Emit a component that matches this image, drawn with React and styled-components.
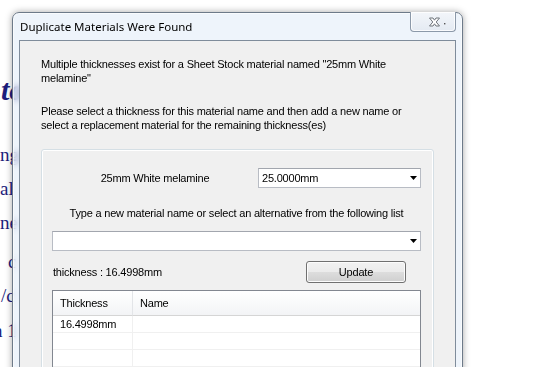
import React from "react";
import styled, { createGlobalStyle } from "styled-components";

const GlobalStyle = createGlobalStyle`
  html, body {
    margin: 0;
    padding: 0;
    background: #ffffff;
  }
`;

const Desktop = styled.div`
  position: relative;
  width: 536px;
  height: 367px;
  overflow: hidden;
  background: #ffffff;
`;

const BackText = styled.div`
  display: flex;
  flex-direction: column;
  font-family: "Liberation Serif", "DejaVu Serif", serif;
  color: #1d1d7c;
`;

const BackLine = styled.div`
  display: flex;
  align-items: center;
  white-space: nowrap;
  margin-top: ${({ $top }) => $top}px;
  margin-left: ${({ $x }) => $x}px;
  height: ${({ $h }) => $h}px;
  font-size: ${({ $size }) => $size}px;
  font-style: ${({ $italic }) => ($italic ? "italic" : "normal")};
  font-weight: ${({ $bold }) => ($bold ? 700 : 400)};
`;

const Window = styled.div`
  position: absolute;
  left: 12px;
  top: 12px;
  width: 451px;
  height: 400px;
  box-sizing: border-box;
  display: flex;
  flex-direction: column;
  padding: 0 6px;
  border: 1px solid #6d7a89;
  border-radius: 7px 7px 0 0;
  background: rgba(226, 236, 248, 0.6);
  backdrop-filter: blur(3px);
  box-shadow: 0 0 7px rgba(0, 0, 0, 0.35), inset 0 0 0 1px rgba(255, 255, 255, 0.7);
`;

const TitleBar = styled.div`
  height: 27px;
  display: flex;
  align-items: center;
  padding-left: 1px;
  font-family: "Noto Sans", "Open Sans", sans-serif;
  font-size: 11.5px;
  color: #000;
`;

const CloseButton = styled.div`
  position: absolute;
  top: -1px;
  right: 6px;
  width: 46px;
  height: 20px;
  box-sizing: border-box;
  display: flex;
  align-items: center;
  padding-left: 18px;
  border: 1px solid #8c99a9;
  border-top: none;
  border-radius: 0 0 4px 4px;
  background: linear-gradient(#f3f6fa, #e4eaf2);
  box-shadow: inset 0 0 0 1px rgba(255, 255, 255, 0.8);
`;

const Client = styled.div`
  flex: 1;
  border: 1px solid #7f8c9b;
  border-bottom: none;
  background: #f0f0f0;
  padding: 16px 21px 0 21px;
  font-family: "Liberation Sans", Arial, sans-serif;
  font-size: 11px;
  letter-spacing: -0.2px;
  color: #000;
`;

const Para = styled.p`
  margin: 0 0 ${({ $gap }) => $gap}px 0;
  line-height: 14px;
`;

const GroupBox = styled.div`
  border: 1px solid #d5dfe5;
  border-radius: 3px;
  box-shadow: inset 0 0 0 1px #ffffff;
  padding: 18px 12px 0 10px;
  height: 240px;
`;

const Row = styled.div`
  display: flex;
  align-items: center;
  margin-bottom: ${({ $gap }) => $gap}px;
`;

const RowLabel = styled.div`
  flex: 1;
  text-align: center;
`;

const CenterText = styled.div`
  text-align: center;
  line-height: 14px;
  margin-bottom: ${({ $gap }) => $gap}px;
`;

const Combo = styled.div`
  box-sizing: border-box;
  width: ${({ $w }) => $w};
  height: 20px;
  display: flex;
  align-items: center;
  padding: 0 3px 0 3px;
  background: #ffffff;
  border: 1px solid #b8bcc4;
  border-top-color: #a2a6ae;
`;

const ComboText = styled.span`
  flex: 1;
`;

const Arrow = styled.svg`
  width: 7px;
  height: 4px;
`;

const InfoRow = styled.div`
  display: flex;
  align-items: center;
  justify-content: space-between;
  margin-bottom: 7px;
  padding-left: 1px;
  padding-right: 15px;
`;

const Button = styled.div`
  box-sizing: border-box;
  width: 100px;
  height: 22px;
  display: flex;
  align-items: center;
  justify-content: center;
  border: 1px solid #707070;
  border-radius: 3px;
  background: linear-gradient(#f2f2f2 0%, #ebebeb 50%, #dddddd 51%, #cfcfcf 100%);
  box-shadow: inset 0 0 0 1px #fcfcfc;
`;

const ListView = styled.div`
  box-sizing: border-box;
  width: 369px;
  height: 120px;
  border: 1px solid #828790;
  background: #ffffff;
  display: grid;
  grid-template-columns: 80px 1fr;
  grid-template-rows: 25px;
  grid-auto-rows: 17px;
  align-content: start;
`;

const HeaderCell = styled.div`
  box-sizing: border-box;
  display: flex;
  align-items: center;
  padding-left: 7px;
  background: linear-gradient(#ffffff, #f3f4f6);
  border-bottom: 1px solid #d5d5d5;
  border-right: ${({ $sep }) => ($sep ? "1px solid #e3e5e8" : "none")};
`;

const Cell = styled.div`
  box-sizing: border-box;
  display: flex;
  align-items: center;
  padding-left: 7px;
  border-bottom: 1px solid #f0f0f0;
  border-right: ${({ $sep }) => ($sep ? "1px solid #f0f0f0" : "none")};
`;

const DownArrow = () => (
  <Arrow viewBox="0 0 7 4">
    <path d="M0 0 H7 L3.5 4 Z" fill="#000" />
  </Arrow>
);

const rows = [["16.4998mm", ""], ["", ""], ["", ""], ["", ""]];

export default function App() {
  return (
    <>
      <GlobalStyle />
      <Desktop>
        <BackText>
          <BackLine $top={74} $h={32} $x={1} $size={30} $italic $bold>
            to
          </BackLine>
          <BackLine $top={32} $h={34} $x={0} $size={19}>
            ngs
          </BackLine>
          <BackLine $top={0} $h={34} $x={0} $size={19}>
            al
          </BackLine>
          <BackLine $top={0} $h={34} $x={0} $size={19}>
            ne
          </BackLine>
          <BackLine $top={5} $h={34} $x={8} $size={19}>
            c
          </BackLine>
          <BackLine $top={0} $h={34} $x={1} $size={19}>
            /c
          </BackLine>
          <BackLine $top={1} $h={34} $x={-7} $size={19}>
            n 1
          </BackLine>
        </BackText>

        <Window>
          <TitleBar>Duplicate Materials Were Found</TitleBar>
          <CloseButton>
            <svg width="20" height="10" viewBox="0 0 20 10">
              <path
                d="M0.5 1 H4 L5.5 3.2 L7 1 H10.5 L7.2 5 L10.5 9 H7 L5.5 6.8 L4 9 H0.5 L3.8 5 Z"
                fill="#ffffff"
                stroke="#6f747b"
                strokeWidth="1"
                strokeLinejoin="round"
              />
              <rect x="15" y="6" width="1.4" height="1.4" fill="#555" />
            </svg>
          </CloseButton>
          <Client>
            <Para $gap={19}>
              Multiple thicknesses exist for a Sheet Stock material named "25mm White
              <br />
              melamine"
            </Para>
            <Para $gap={17}>
              Please select a thickness for this material name and then add a new name or
              <br />
              select a replacement material for the remaining thickness(es)
            </Para>
            <GroupBox>
              <Row $gap={18}>
                <RowLabel>25mm White melamine</RowLabel>
                <Combo $w="163px">
                  <ComboText>25.0000mm</ComboText>
                  <DownArrow />
                </Combo>
              </Row>
              <CenterText $gap={11}>
                Type a new material name or select an alternative from the following list
              </CenterText>
              <Row $gap={10}>
                <Combo $w="100%">
                  <ComboText />
                  <DownArrow />
                </Combo>
              </Row>
              <InfoRow>
                <span>thickness : 16.4998mm</span>
                <Button>Update</Button>
              </InfoRow>
              <ListView>
                <HeaderCell $sep>Thickness</HeaderCell>
                <HeaderCell>Name</HeaderCell>
                {rows.map(([t, n], i) => (
                  <React.Fragment key={i}>
                    <Cell $sep>{t}</Cell>
                    <Cell>{n}</Cell>
                  </React.Fragment>
                ))}
              </ListView>
            </GroupBox>
          </Client>
        </Window>
      </Desktop>
    </>
  );
}
